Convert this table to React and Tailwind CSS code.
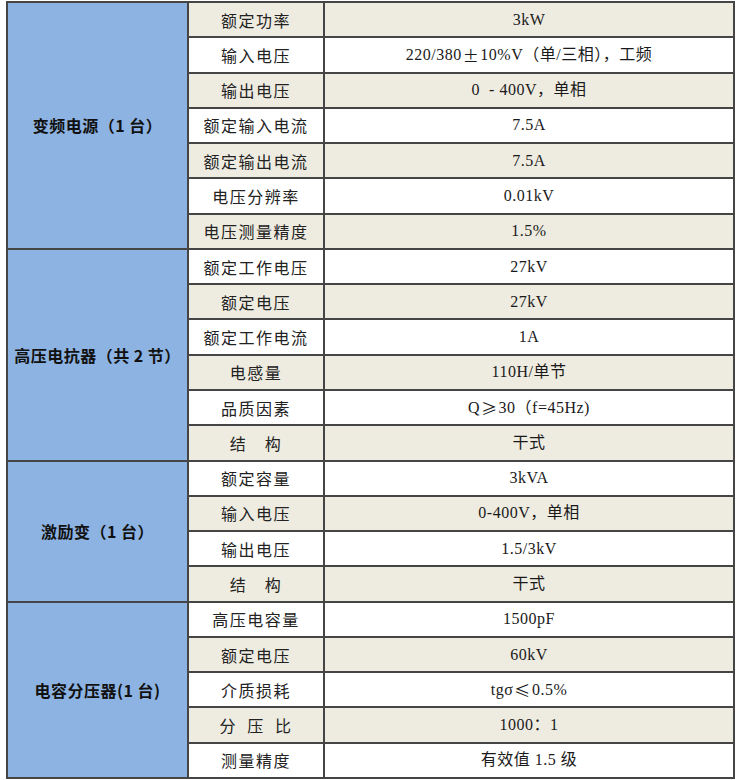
import React from 'react';

// full-width glyphs (±, ≥, ≤) drawn with the CJK face, as in the source sheet
const W = ({ children }) => (
  <span className="font-['Noto_Sans_CJK_SC',sans-serif] mx-[1px]">{children}</span>
);

const groups = [
  {
    name: '变频电源（1 台）',
    rows: [
      ['额定功率', '3kW'],
      ['输入电压', <>220/380<W>±</W>10%V（单/三相），工频</>],
      ['输出电压', '0\u00a0\u00a0-\u00a0400V，单相'],
      ['额定输入电流', '7.5A'],
      ['额定输出电流', '7.5A'],
      ['电压分辨率', '0.01kV'],
      ['电压测量精度', '1.5%'],
    ],
  },
  {
    name: '高压电抗器（共 2 节）',
    rows: [
      ['额定工作电压', '27kV'],
      ['额定电压', '27kV'],
      ['额定工作电流', '1A'],
      ['电感量', '110H/单节'],
      ['品质因素', <>Q<W>≥</W>30（f=45Hz)</>],
      ['结\u3000构', '干式'],
    ],
  },
  {
    name: '激励变（1 台）',
    rows: [
      ['额定容量', '3kVA'],
      ['输入电压', '0-400V，单相'],
      ['输出电压', '1.5/3kV'],
      ['结\u3000构', '干式'],
    ],
  },
  {
    name: '电容分压器(1 台)',
    rows: [
      ['高压电容量', '1500pF'],
      ['额定电压', '60kV'],
      ['介质损耗', <>tgσ<W>≤</W>0.5%</>],
      ['分\u00a0\u00a0压\u00a0\u00a0比', '1000：1'],
      ['测量精度', '有效值 1.5 级'],
    ],
  },
];

const spans = ['row-span-7', 'row-span-6', 'row-span-4', 'row-span-5'];

const SpecTable = () => {
  let idx = 0;
  return (
    <div className="ml-[6px] mt-[1px] w-[729px] h-[778px] p-[2px] bg-[#454545] grid grid-cols-[179px_134px_1fr] grid-rows-[repeat(22,1fr)] gap-[2px]">
      {groups.map((g, gi) => (
        <React.Fragment key={gi}>
          <div
            className={`${spans[gi]} bg-[#8db3e2] flex items-center justify-center text-[16px] tracking-[0.5px] font-bold text-[#111] font-['Noto_Sans_CJK_SC',sans-serif]`}
          >
            {g.name}
          </div>
          {g.rows.map(([label, value]) => {
            const shaded = idx++ % 2 === 0;
            const bg = shaded ? 'bg-[#eeece1]' : 'bg-white';
            return (
              <React.Fragment key={idx}>
                <div className={`${bg} flex items-center justify-center text-[16px] tracking-[1.5px] text-[#222] font-['Noto_Sans_CJK_SC',sans-serif]`}>
                  {label}
                </div>
                <div className={`${bg} flex items-center justify-center whitespace-pre text-[16px] tracking-[0.5px] text-[#1a1a1a] font-['Liberation_Serif','Noto_Sans_CJK_SC',serif]`}>
                  {value}
                </div>
              </React.Fragment>
            );
          })}
        </React.Fragment>
      ))}
    </div>
  );
};

export default function App() {
  return (
    <div className="w-[750px] h-[780px] bg-white overflow-hidden">
      <SpecTable />
    </div>
  );
}
